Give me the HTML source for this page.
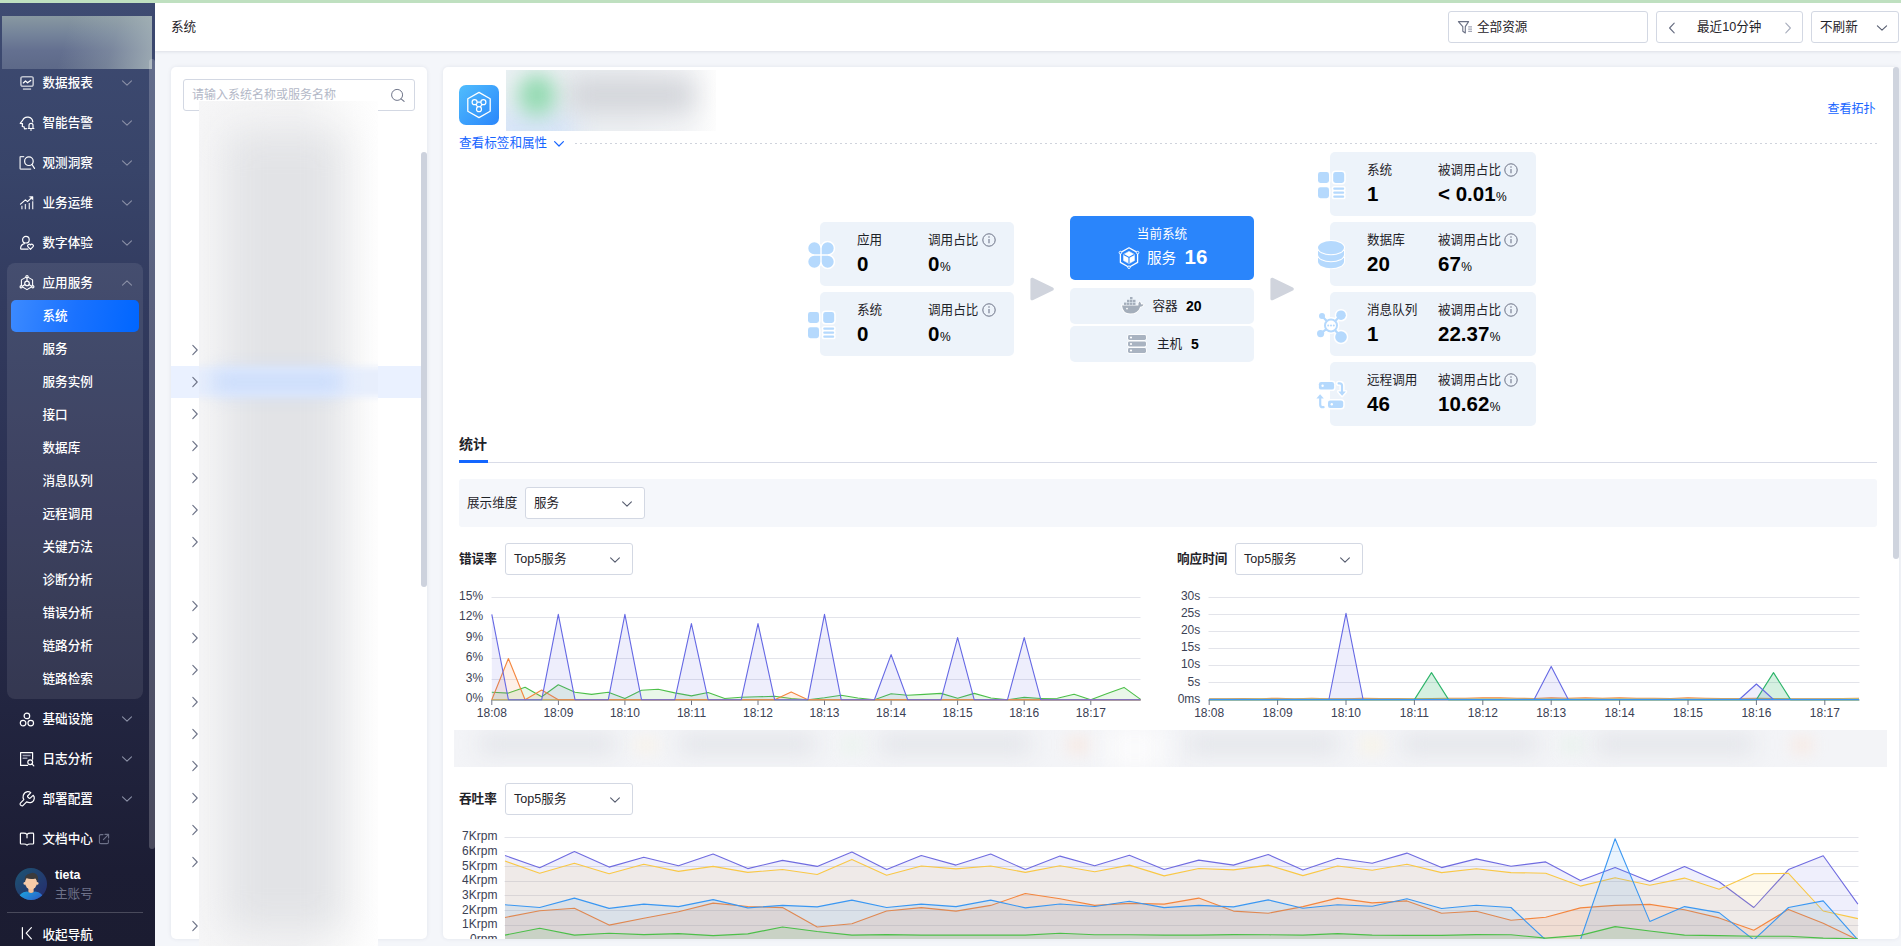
<!DOCTYPE html>
<html lang="zh-CN">
<head>
<meta charset="utf-8">
<title>系统</title>
<style>
*{box-sizing:border-box;margin:0;padding:0}
html,body{width:1901px;height:946px;overflow:hidden}
body{position:relative;background:#f4f6fa;font-family:"Liberation Sans","Noto Sans CJK SC",sans-serif;font-size:12px;color:#1f2329;}
.abs{position:absolute}
.t{position:absolute;white-space:nowrap;line-height:20px;height:20px}
#green{position:absolute;left:0;top:0;width:1901px;height:3px;background:#bfe0c0;z-index:50}
/* sidebar */
#side{position:absolute;left:0;top:0;width:155px;height:946px;background:linear-gradient(180deg,#3e4b72 0%,#384469 18%,#323b5f 32%,#2a2f50 55%,#222540 75%,#1c1d34 92%,#1b1c31 100%);overflow:hidden}
#logo{position:absolute;left:2px;top:16px;width:150px;height:53px;background:linear-gradient(105deg,rgba(172,186,188,0) 42%,rgba(172,186,188,.3) 72%,rgba(174,188,190,.78) 100%),linear-gradient(180deg,#8898a1 0%,#74839a 35%,#647090 65%,#5d6988 100%);}
#sthumb{position:absolute;left:149px;top:59px;width:6px;height:790px;border-radius:3px;background:rgba(255,255,255,.2)}
.mi{position:absolute;left:0;width:149px;height:40px}
.mi .ic{position:absolute;left:19px;top:12px;width:16px;height:16px}
.mi .tx{position:absolute;left:42.5px;top:10px;line-height:20px;font-size:12.6px;font-weight:500;color:#fff;white-space:nowrap}
.mi .ch{position:absolute;left:121px;top:15px;width:12px;height:10px}
#grp{position:absolute;left:7px;top:263px;width:136px;height:436px;border-radius:8px;background:rgba(255,255,255,.085)}
#act{position:absolute;left:11px;top:300px;width:128px;height:32px;border-radius:5px;background:linear-gradient(100deg,#3c8aff 0%,#1a72ff 50%,#0066ff 100%)}
.si{position:absolute;left:42.5px;line-height:20px;height:20px;font-size:12.6px;font-weight:500;color:#fff;white-space:nowrap}
svg{display:block;overflow:visible}
.ws{fill:none;stroke:#fff;stroke-width:1.2;stroke-linecap:round;stroke-linejoin:round}
/* topbar */
#top{position:absolute;left:155px;top:3px;width:1746px;height:48px;background:#fff;box-shadow:0 1px 3px rgba(20,30,60,.10)}
.box{position:absolute;background:#fff;border:1px solid #d3d8e3;border-radius:3px}
/* panels */
.panel{position:absolute;background:#fff;border-radius:5px;box-shadow:0 0 4px rgba(30,40,80,.08)}
.card{position:absolute;background:#edf3fa;border-radius:5px}
.lab{position:absolute;white-space:nowrap;font-size:12px;line-height:16px;color:#1f2329}
.num{position:absolute;white-space:nowrap;font-size:20.5px;line-height:24px;font-weight:700;color:#000;letter-spacing:0}
.pct{font-size:12px;font-weight:400;margin-left:.5px}
.info{position:absolute;width:14px;height:14px}
.link{color:#1664ff}
.sel{position:absolute;background:#fff;border:1px solid #d3d8e3;border-radius:3px;height:32px}
.sel span{position:absolute;left:8px;top:5px;line-height:20px;font-size:12.6px;color:#1f2329;white-space:nowrap}
.sel svg{position:absolute;right:11px;top:11px}
.ax{font-family:"Liberation Sans",sans-serif;font-size:12px;fill:#3b4154}
</style>
</head>
<body>
<div id="green"></div>
<div id="side">
<div id="logo"></div>
<div id="grp"></div><div id="act"></div>
<div class="mi" style="top:63px"><svg class="ic" viewBox="0 0 16 16"><g class="ws"><rect x="1.9" y="1.7" width="12.3" height="9.5" rx="2" stroke-width="1.6" stroke-opacity=".66"/><path d="M4.3 7.9 L6.5 5.9 L8.5 7.8 L11.7 5.4" stroke-width="1.3"/><path d="M3.9 14.1 H12.1" stroke-width="1.6" stroke-opacity=".66" stroke-linecap="butt"/></g></svg><span class="tx">数据报表</span><svg class="ch" viewBox="0 0 12 10"><path d="M1.5 2.8 L6 7.2 L10.5 2.8" fill="none" stroke="#8b90a6" stroke-width="1.1" stroke-linecap="round" stroke-linejoin="round"/></svg></div>
<div class="mi" style="top:103px"><svg class="ic" viewBox="0 0 16 16"><g class="ws"><path d="M13.8 6.9 A5.3 5.3 0 0 0 3.6 5.4 L1.2 8.3 L3.5 8.7 L3.3 11.5 L5.1 11.8 L5.5 13.9 L7.4 13.7"/><path d="M9.2 13.5 H14.9 M10 13.3 V10.3 A2 2 0 0 1 14 10.3 V13.3 M12 14.7 V15.3"/></g></svg><span class="tx">智能告警</span><svg class="ch" viewBox="0 0 12 10"><path d="M1.5 2.8 L6 7.2 L10.5 2.8" fill="none" stroke="#8b90a6" stroke-width="1.1" stroke-linecap="round" stroke-linejoin="round"/></svg></div>
<div class="mi" style="top:143px"><svg class="ic" viewBox="0 0 16 16"><g class="ws"><path d="M4.7 1.7 H1.6 Q1.1 1.7 1.1 2.2 V13.6 Q1.1 14.1 1.6 14.1 H11.7" stroke-width="1.3" stroke-opacity=".85"/><circle cx="9.9" cy="6.2" r="4.3"/><path d="M13 9.5 L15.5 13.4"/></g></svg><span class="tx">观测洞察</span><svg class="ch" viewBox="0 0 12 10"><path d="M1.5 2.8 L6 7.2 L10.5 2.8" fill="none" stroke="#8b90a6" stroke-width="1.1" stroke-linecap="round" stroke-linejoin="round"/></svg></div>
<div class="mi" style="top:183px"><svg class="ic" viewBox="0 0 16 16"><g class="ws"><path d="M2.9 14.3 V10.8 M6.4 14.3 V9 M10.3 14.3 V8 M13.7 14.3 V6.3" stroke-opacity=".8" stroke-width="1.3" stroke-linecap="butt"/><path d="M1.5 9.1 L6.4 4.9 L8.5 6.6 L12.6 2.8"/><path d="M10.6 1.6 H14 V5 Z" fill="#fff" stroke-width=".5"/></g></svg><span class="tx">业务运维</span><svg class="ch" viewBox="0 0 12 10"><path d="M1.5 2.8 L6 7.2 L10.5 2.8" fill="none" stroke="#8b90a6" stroke-width="1.1" stroke-linecap="round" stroke-linejoin="round"/></svg></div>
<div class="mi" style="top:223px"><svg class="ic" viewBox="0 0 16 16"><g class="ws"><circle cx="6.9" cy="4.7" r="3.3"/><path d="M9 14.2 H2.4 Q1.6 14.2 1.6 13.2 Q1.8 9.6 5.4 8.6"/><path d="M11.5 14.3 L8.9 11.7 A1.5 1.5 0 0 1 11.5 9.9 A1.5 1.5 0 0 1 14.1 11.7 Z"/></g></svg><span class="tx">数字体验</span><svg class="ch" viewBox="0 0 12 10"><path d="M1.5 2.8 L6 7.2 L10.5 2.8" fill="none" stroke="#8b90a6" stroke-width="1.1" stroke-linecap="round" stroke-linejoin="round"/></svg></div>
<div class="mi" style="top:263px"><svg class="ic" viewBox="0 0 16 16"><g class="ws"><path d="M8 1.6 L13.6 4.9 V11.3 L8 14.6 L2.4 11.3 V4.9 Z" stroke-width="1.1"/><circle cx="8" cy="8.4" r="2.3"/><path d="M8 2.6 V6"/><path d="M3 11.4 L6 9.6 M13 11.4 L10 9.6"/><circle cx="8" cy="1.6" r="1.1" fill="#3f4868"/><circle cx="2.2" cy="11.7" r="1.1" fill="#3f4868"/><circle cx="13.8" cy="11.7" r="1.1" fill="#3f4868"/></g></svg><span class="tx">应用服务</span><svg class="ch" viewBox="0 0 12 10"><path d="M1.5 7.2 L6 2.8 L10.5 7.2" fill="none" stroke="#8b90a6" stroke-width="1.1" stroke-linecap="round" stroke-linejoin="round"/></svg></div>
<div class="mi" style="top:699px"><svg class="ic" viewBox="0 0 16 16"><g class="ws"><circle cx="7.9" cy="4.9" r="2.8"/><circle cx="4.1" cy="12.1" r="2.8"/><circle cx="11.75" cy="12.1" r="2.8"/></g></svg><span class="tx">基础设施</span><svg class="ch" viewBox="0 0 12 10"><path d="M1.5 2.8 L6 7.2 L10.5 2.8" fill="none" stroke="#8b90a6" stroke-width="1.1" stroke-linecap="round" stroke-linejoin="round"/></svg></div>
<div class="mi" style="top:739px"><svg class="ic" viewBox="0 0 16 16"><g class="ws"><path d="M8.6 14.4 H1.6 V1.6 H13.6 V8.2"/><path d="M3.6 4.6 H11.6 M3.6 7.2 H8.4" stroke="#9a9db0" stroke-width="1.5" stroke-linecap="butt"/><circle cx="11.2" cy="11.2" r="2.4"/><path d="M13 13 L14.8 14.8"/></g></svg><span class="tx">日志分析</span><svg class="ch" viewBox="0 0 12 10"><path d="M1.5 2.8 L6 7.2 L10.5 2.8" fill="none" stroke="#8b90a6" stroke-width="1.1" stroke-linecap="round" stroke-linejoin="round"/></svg></div>
<div class="mi" style="top:779px"><svg class="ic" viewBox="0 0 16 16"><g class="ws"><path d="M8.5 0.6 Q10.4 0.4 11.8 1.6 L8.6 5 Q8.4 5.6 8.8 6 L10.2 7.3 Q10.8 7.6 11.2 7.2 L14.1 4.3 Q15.6 5.6 15.3 7.4 Q14.6 11.3 11.6 11.6 Q9.4 11.8 7.6 10.9 L3.9 14.6 Q3.1 15.3 2.2 14.6 L1.4 13.8 Q0.7 12.9 1.4 12.1 L4.8 8.6 Q3.6 6.6 4.3 4.3 Q5.4 1.2 8.5 0.6 Z"/></g></svg><span class="tx">部署配置</span><svg class="ch" viewBox="0 0 12 10"><path d="M1.5 2.8 L6 7.2 L10.5 2.8" fill="none" stroke="#8b90a6" stroke-width="1.1" stroke-linecap="round" stroke-linejoin="round"/></svg></div>
<div class="mi" style="top:819px"><svg class="ic" viewBox="0 0 16 16"><g class="ws"><path d="M8 3.4 Q6.8 2.2 4.6 2.2 H2.2 Q1.4 2.2 1.4 3 V12.2 Q1.4 13 2.2 13 H5 Q7 13 8 14.2 Q9 13 11 13 H13.8 Q14.6 13 14.6 12.2 V3 Q14.6 2.2 13.8 2.2 H11.4 Q9.2 2.2 8 3.4 Z"/><path d="M8 3.4 V6.8"/></g></svg><span class="tx">文档中心</span><svg style="position:absolute;left:98px;top:14px" width="12" height="12" viewBox="0 0 12 12"><path d="M5 1.6 H2.8 Q1.4 1.6 1.4 3 V9.2 Q1.4 10.6 2.8 10.6 H9 Q10.4 10.6 10.4 9.2 V7" fill="none" stroke="#6d7188" stroke-width="1.1" stroke-linecap="round"/><path d="M5.4 6.6 L10.4 1.6 M7 1.4 H10.6 V5" fill="none" stroke="#6d7188" stroke-width="1.1" stroke-linecap="round" stroke-linejoin="round"/></svg></div>
<span class="si" style="top:306px">系统</span>
<span class="si" style="top:339px">服务</span>
<span class="si" style="top:372px">服务实例</span>
<span class="si" style="top:405px">接口</span>
<span class="si" style="top:438px">数据库</span>
<span class="si" style="top:471px">消息队列</span>
<span class="si" style="top:504px">远程调用</span>
<span class="si" style="top:537px">关键方法</span>
<span class="si" style="top:570px">诊断分析</span>
<span class="si" style="top:603px">错误分析</span>
<span class="si" style="top:636px">链路分析</span>
<span class="si" style="top:669px">链路检索</span>
<svg style="position:absolute;left:15px;top:868px" width="32" height="32" viewBox="0 0 32 32"><defs><linearGradient id="avb" x1="0" y1="0" x2="1" y2="1"><stop offset="0" stop-color="#1d5573"/><stop offset="1" stop-color="#262a6c"/></linearGradient><linearGradient id="avs" x1="0" y1="0" x2="1" y2="0.6"><stop offset="0" stop-color="#1ca9e0"/><stop offset="1" stop-color="#2b5cc6"/></linearGradient><clipPath id="avc"><circle cx="16" cy="16" r="16"/></clipPath></defs><g clip-path="url(#avc)"><rect width="32" height="32" fill="url(#avb)"/><path d="M3 34 Q3 24.5 12 23.6 L16 25 L20 23.6 Q29 24.5 29 34 Z" fill="url(#avs)"/><path d="M13.4 19 H18.6 V24 Q16 26 13.4 24 Z" fill="#f3c19b"/><ellipse cx="16" cy="14.6" rx="6" ry="7" fill="#f7cba8"/><circle cx="9.8" cy="15.4" r="1.3" fill="#f7cba8"/><circle cx="22.2" cy="15.4" r="1.3" fill="#f7cba8"/><path d="M9.6 14.6 Q8.6 6.2 15 5.4 Q19 3.6 21.6 6.6 Q24 9 22.6 14.6 Q22 11.6 20.6 10.4 Q15 11.6 11.4 10 Q10 11.6 9.6 14.6 Z" fill="#3b3b3d"/></g></svg>
<span class="t" style="left:55px;top:865px;font-size:12.4px;font-weight:700;color:#fff;font-family:'Liberation Sans',sans-serif">tieta</span>
<span class="t" style="left:55px;top:883.5px;font-size:12.6px;color:#6e7289">主账号</span>
<div class="abs" style="left:7px;top:912px;width:136px;height:1px;background:rgba(255,255,255,.2)"></div>
<svg style="position:absolute;left:19px;top:925px" width="16" height="16" viewBox="0 0 16 16"><path d="M3.4 2.6 V13.8 M12.4 2.6 L7.2 8.2 L12.4 13.8" fill="none" stroke="#fff" stroke-width="1.2" stroke-linecap="round" stroke-linejoin="round"/></svg>
<span class="si" style="top:924.5px">收起导航</span>
<div id="sthumb"></div>
</div>
<div id="top">
<span class="t" style="left:16px;top:14px;font-size:12.6px;color:#1f2329">系统</span>
</div>
<div class="box" style="left:1448px;top:11px;width:200px;height:32px"><svg style="position:absolute;left:9px;top:8px" width="16" height="16" viewBox="0 0 16 16"><path d="M0.4 1.6 H10.6 L7.3 6.6 V13 L4.8 11.2 V6.6 Z" fill="none" stroke="#6b7185" stroke-width="1.1" stroke-linejoin="round"/><path d="M10.2 6.9 H14 M10.2 9.1 H14 M10.2 11.3 H14" stroke="#8a8fa3" stroke-width="1"/></svg><span class="t" style="left:28px;top:5px;font-size:12.6px;color:#1f2329">全部资源</span></div>
<div class="box" style="left:1656px;top:11px;width:147px;height:32px"><svg style="position:absolute;left:10px;top:10px" width="10" height="12" viewBox="0 0 10 12"><path d="M7.2 1.2 L2.6 6 L7.2 10.8" fill="none" stroke="#666c80" stroke-width="1.1" stroke-linecap="round" stroke-linejoin="round"/></svg><span class="t" style="left:40px;top:5px;font-size:12.6px;color:#1f2329">最近10分钟</span><svg style="position:absolute;left:126px;top:10px" width="10" height="12" viewBox="0 0 10 12"><path d="M2.8 1.2 L7.4 6 L2.8 10.8" fill="none" stroke="#a9aebd" stroke-width="1.1" stroke-linecap="round" stroke-linejoin="round"/></svg></div>
<div class="box" style="left:1811px;top:11px;width:88px;height:32px"><span class="t" style="left:8px;top:5px;font-size:12.6px;color:#1f2329">不刷新</span><svg style="position:absolute;left:64px;top:11px" width="12" height="10" viewBox="0 0 12 10"><path d="M1.4 2.8 L6 7.2 L10.6 2.8" fill="none" stroke="#555b6e" stroke-width="1.1" stroke-linecap="round" stroke-linejoin="round"/></svg></div>
<div class="panel" style="left:171px;top:67px;width:256px;height:872px;overflow:hidden">
<div class="abs" style="left:0;top:299px;width:250px;height:32px;background:#eaf1ff"></div>
<svg style="position:absolute;left:20px;top:277px" width="8" height="12" viewBox="0 0 8 12"><path d="M1.8 1.4 L6.2 6 L1.8 10.6" fill="none" stroke="#6d7387" stroke-width="1.1" stroke-linecap="round" stroke-linejoin="round"/></svg>
<svg style="position:absolute;left:20px;top:309px" width="8" height="12" viewBox="0 0 8 12"><path d="M1.8 1.4 L6.2 6 L1.8 10.6" fill="none" stroke="#6d7387" stroke-width="1.1" stroke-linecap="round" stroke-linejoin="round"/></svg>
<svg style="position:absolute;left:20px;top:341px" width="8" height="12" viewBox="0 0 8 12"><path d="M1.8 1.4 L6.2 6 L1.8 10.6" fill="none" stroke="#6d7387" stroke-width="1.1" stroke-linecap="round" stroke-linejoin="round"/></svg>
<svg style="position:absolute;left:20px;top:373px" width="8" height="12" viewBox="0 0 8 12"><path d="M1.8 1.4 L6.2 6 L1.8 10.6" fill="none" stroke="#6d7387" stroke-width="1.1" stroke-linecap="round" stroke-linejoin="round"/></svg>
<svg style="position:absolute;left:20px;top:405px" width="8" height="12" viewBox="0 0 8 12"><path d="M1.8 1.4 L6.2 6 L1.8 10.6" fill="none" stroke="#6d7387" stroke-width="1.1" stroke-linecap="round" stroke-linejoin="round"/></svg>
<svg style="position:absolute;left:20px;top:437px" width="8" height="12" viewBox="0 0 8 12"><path d="M1.8 1.4 L6.2 6 L1.8 10.6" fill="none" stroke="#6d7387" stroke-width="1.1" stroke-linecap="round" stroke-linejoin="round"/></svg>
<svg style="position:absolute;left:20px;top:469px" width="8" height="12" viewBox="0 0 8 12"><path d="M1.8 1.4 L6.2 6 L1.8 10.6" fill="none" stroke="#6d7387" stroke-width="1.1" stroke-linecap="round" stroke-linejoin="round"/></svg>
<svg style="position:absolute;left:20px;top:533px" width="8" height="12" viewBox="0 0 8 12"><path d="M1.8 1.4 L6.2 6 L1.8 10.6" fill="none" stroke="#6d7387" stroke-width="1.1" stroke-linecap="round" stroke-linejoin="round"/></svg>
<svg style="position:absolute;left:20px;top:565px" width="8" height="12" viewBox="0 0 8 12"><path d="M1.8 1.4 L6.2 6 L1.8 10.6" fill="none" stroke="#6d7387" stroke-width="1.1" stroke-linecap="round" stroke-linejoin="round"/></svg>
<svg style="position:absolute;left:20px;top:597px" width="8" height="12" viewBox="0 0 8 12"><path d="M1.8 1.4 L6.2 6 L1.8 10.6" fill="none" stroke="#6d7387" stroke-width="1.1" stroke-linecap="round" stroke-linejoin="round"/></svg>
<svg style="position:absolute;left:20px;top:629px" width="8" height="12" viewBox="0 0 8 12"><path d="M1.8 1.4 L6.2 6 L1.8 10.6" fill="none" stroke="#6d7387" stroke-width="1.1" stroke-linecap="round" stroke-linejoin="round"/></svg>
<svg style="position:absolute;left:20px;top:661px" width="8" height="12" viewBox="0 0 8 12"><path d="M1.8 1.4 L6.2 6 L1.8 10.6" fill="none" stroke="#6d7387" stroke-width="1.1" stroke-linecap="round" stroke-linejoin="round"/></svg>
<svg style="position:absolute;left:20px;top:693px" width="8" height="12" viewBox="0 0 8 12"><path d="M1.8 1.4 L6.2 6 L1.8 10.6" fill="none" stroke="#6d7387" stroke-width="1.1" stroke-linecap="round" stroke-linejoin="round"/></svg>
<svg style="position:absolute;left:20px;top:725px" width="8" height="12" viewBox="0 0 8 12"><path d="M1.8 1.4 L6.2 6 L1.8 10.6" fill="none" stroke="#6d7387" stroke-width="1.1" stroke-linecap="round" stroke-linejoin="round"/></svg>
<svg style="position:absolute;left:20px;top:757px" width="8" height="12" viewBox="0 0 8 12"><path d="M1.8 1.4 L6.2 6 L1.8 10.6" fill="none" stroke="#6d7387" stroke-width="1.1" stroke-linecap="round" stroke-linejoin="round"/></svg>
<svg style="position:absolute;left:20px;top:789px" width="8" height="12" viewBox="0 0 8 12"><path d="M1.8 1.4 L6.2 6 L1.8 10.6" fill="none" stroke="#6d7387" stroke-width="1.1" stroke-linecap="round" stroke-linejoin="round"/></svg>
<svg style="position:absolute;left:20px;top:853px" width="8" height="12" viewBox="0 0 8 12"><path d="M1.8 1.4 L6.2 6 L1.8 10.6" fill="none" stroke="#6d7387" stroke-width="1.1" stroke-linecap="round" stroke-linejoin="round"/></svg>
<div class="abs" style="left:250px;top:85px;width:6px;height:435px;border-radius:3px;background:#cdd2dd"></div>
</div>
<div class="box" style="left:183px;top:79px;width:232px;height:32px"><span class="t" style="left:8px;top:5px;font-size:12px;color:#b3b8c7">请输入系统名称或服务名称</span><svg style="position:absolute;left:206px;top:8px" width="16" height="16" viewBox="0 0 16 16"><circle cx="7.1" cy="6.9" r="5.5" fill="none" stroke="#70768a" stroke-width="1"/><path d="M11.1 10.8 L14.1 13.4" stroke="#70768a" stroke-width="1.1" stroke-linecap="round"/></svg></div>
<div class="abs" style="left:199px;top:101px;width:179px;height:845px;background:linear-gradient(90deg,#f6f6f7 0%,#f4f4f5 55%,#fbfbfb 85%,#fefefe 100%);overflow:hidden"><div class="abs" style="left:26px;top:30px;width:118px;height:800px;background:#e2e3e6;filter:blur(19px)"></div><div class="abs" style="left:-10px;top:266px;width:200px;height:30px;background:#e7eefc;filter:blur(3px)"></div><div class="abs" style="left:14px;top:270px;width:130px;height:22px;background:#c8dbfc;filter:blur(10px)"></div></div>
<div class="panel" style="left:443px;top:67px;width:1456px;height:872px"></div>
<div class="abs" style="left:1893px;top:67px;width:6px;height:492px;border-radius:3px;background:#cfd4de"></div>
<svg class="abs" style="left:459px;top:85px" width="40" height="40" viewBox="0 0 40 40"><defs><linearGradient id="ag" x1="0" y1="0" x2="1" y2="1"><stop offset="0" stop-color="#50bdfd"/><stop offset="1" stop-color="#2a86fb"/></linearGradient></defs><rect width="40" height="40" rx="7" fill="url(#ag)"/><path d="M20 7.4 L31.2 13.7 V26.3 L20 32.6 L8.8 26.3 V13.7 Z" fill="none" stroke="#fff" stroke-width="1.3" stroke-linejoin="round"/><g fill="none" stroke="#fff" stroke-width="1.2"><circle cx="15.6" cy="17.2" r="2.5"/><circle cx="24.4" cy="17.2" r="2.5"/><circle cx="20" cy="24.2" r="2.5"/><path d="M18.1 17.2 H21.9 M16.9 19.3 L18.8 22.1 M23.1 19.3 L21.2 22.1"/></g></svg>
<div class="abs" style="left:506px;top:70px;width:210px;height:61px;overflow:hidden;background:linear-gradient(90deg,#eaf0f3 0%,#eef0f3 60%,#f4f5f7 85%,#fdfdfd 100%)"><div class="abs" style="left:-20px;top:40px;width:90px;height:40px;background:#d6e4f8;filter:blur(13px)"></div><div class="abs" style="left:62px;top:8px;width:126px;height:34px;background:#d2d4d9;filter:blur(13px)"></div><div class="abs" style="left:12px;top:4px;width:38px;height:42px;border-radius:50%;background:#93dab1;filter:blur(10px)"></div></div>
<span class="t link" style="left:459px;top:133px;font-size:12.6px">查看标签和属性</span>
<svg class="abs" style="left:553px;top:139px" width="12" height="10" viewBox="0 0 12 10"><path d="M1.6 2.6 L6 7 L10.4 2.6" fill="none" stroke="#1664ff" stroke-width="1.2" stroke-linecap="round" stroke-linejoin="round"/></svg>
<div class="abs" style="left:575px;top:143px;width:1302px;height:1px;background:repeating-linear-gradient(90deg,#cfd3dc 0,#cfd3dc 2px,transparent 2px,transparent 5px)"></div>
<span class="t link" style="left:1827.5px;top:99px;font-size:12px">查看拓扑</span>
<div class="card" style="left:820px;top:222px;width:194px;height:64px"></div>
<svg class="abs" style="left:808px;top:242px" width="26" height="26" viewBox="0 0 26 26"><g fill="#fff" stroke="#fff" stroke-width="3" stroke-linejoin="round" stroke-linecap="round"><path d="M6.3 0.3 A6 6 0 0 1 12.3 6.3 V12.3 H6.3 A6 6 0 0 1 6.3 0.3 Z"/><path d="M19.7 0.3 A6 6 0 0 1 19.7 12.3 H13.7 V6.3 A6 6 0 0 1 19.7 0.3 Z"/><path d="M6.3 25.7 A6 6 0 0 1 6.3 13.7 H12.3 V19.7 A6 6 0 0 1 6.3 25.7 Z"/><path d="M19.7 25.7 A6 6 0 0 0 19.7 13.7 H13.7 V19.7 A6 6 0 0 0 19.7 25.7 Z"/></g><g fill="#b5d9fd" stroke="#b5d9fd" stroke-width="0" stroke-linejoin="round" stroke-linecap="round"><path d="M6.3 0.3 A6 6 0 0 1 12.3 6.3 V12.3 H6.3 A6 6 0 0 1 6.3 0.3 Z"/><path d="M19.7 0.3 A6 6 0 0 1 19.7 12.3 H13.7 V6.3 A6 6 0 0 1 19.7 0.3 Z"/><path d="M6.3 25.7 A6 6 0 0 1 6.3 13.7 H12.3 V19.7 A6 6 0 0 1 6.3 25.7 Z"/><path d="M19.7 25.7 A6 6 0 0 0 19.7 13.7 H13.7 V19.7 A6 6 0 0 0 19.7 25.7 Z"/></g></svg>
<span class="lab" style="left:857px;top:232px;font-size:12.6px">应用</span>
<span class="num" style="left:857px;top:252px">0</span>
<span class="lab" style="left:928px;top:232px;font-size:12.6px">调用占比</span>
<svg class="info" style="left:982px;top:233px" viewBox="0 0 14 14"><circle cx="7" cy="7" r="6.2" fill="none" stroke="#6b7185" stroke-width="1"/><path d="M7 6.1 V10.3" stroke="#6b7185" stroke-width="1.05"/><circle cx="7" cy="4.1" r=".75" fill="#6b7185"/></svg>
<span class="num" style="left:928px;top:252px">0<span class="pct">%</span></span>
<div class="card" style="left:820px;top:292px;width:194px;height:64px"></div>
<svg class="abs" style="left:808px;top:312px" width="26" height="26" viewBox="0 0 26 26"><g fill="#fff" stroke="#fff" stroke-width="3" stroke-linejoin="round" stroke-linecap="round"><rect x="0" y="0" width="11" height="11" rx="2.4"/><rect x="15.2" y="0" width="11" height="11" rx="2.4"/><rect x="0" y="15.2" width="11" height="11" rx="2.4"/><rect x="15.2" y="15.6" width="11" height="2.2" rx="1.1"/><rect x="15.2" y="19.6" width="11" height="2.2" rx="1.1"/><rect x="15.2" y="23.6" width="11" height="2.2" rx="1.1"/></g><g fill="#b5d9fd" stroke="#b5d9fd" stroke-width="0" stroke-linejoin="round" stroke-linecap="round"><rect x="0" y="0" width="11" height="11" rx="2.4"/><rect x="15.2" y="0" width="11" height="11" rx="2.4"/><rect x="0" y="15.2" width="11" height="11" rx="2.4"/><rect x="15.2" y="15.6" width="11" height="2.2" rx="1.1"/><rect x="15.2" y="19.6" width="11" height="2.2" rx="1.1"/><rect x="15.2" y="23.6" width="11" height="2.2" rx="1.1"/></g></svg>
<span class="lab" style="left:857px;top:302px;font-size:12.6px">系统</span>
<span class="num" style="left:857px;top:322px">0</span>
<span class="lab" style="left:928px;top:302px;font-size:12.6px">调用占比</span>
<svg class="info" style="left:982px;top:303px" viewBox="0 0 14 14"><circle cx="7" cy="7" r="6.2" fill="none" stroke="#6b7185" stroke-width="1"/><path d="M7 6.1 V10.3" stroke="#6b7185" stroke-width="1.05"/><circle cx="7" cy="4.1" r=".75" fill="#6b7185"/></svg>
<span class="num" style="left:928px;top:322px">0<span class="pct">%</span></span>
<div class="card" style="left:1330px;top:152px;width:206px;height:64px"></div>
<svg class="abs" style="left:1318px;top:172px" width="26" height="26" viewBox="0 0 26 26"><g fill="#fff" stroke="#fff" stroke-width="3" stroke-linejoin="round" stroke-linecap="round"><rect x="0" y="0" width="11" height="11" rx="2.4"/><rect x="15.2" y="0" width="11" height="11" rx="2.4"/><rect x="0" y="15.2" width="11" height="11" rx="2.4"/><rect x="15.2" y="15.6" width="11" height="2.2" rx="1.1"/><rect x="15.2" y="19.6" width="11" height="2.2" rx="1.1"/><rect x="15.2" y="23.6" width="11" height="2.2" rx="1.1"/></g><g fill="#b5d9fd" stroke="#b5d9fd" stroke-width="0" stroke-linejoin="round" stroke-linecap="round"><rect x="0" y="0" width="11" height="11" rx="2.4"/><rect x="15.2" y="0" width="11" height="11" rx="2.4"/><rect x="0" y="15.2" width="11" height="11" rx="2.4"/><rect x="15.2" y="15.6" width="11" height="2.2" rx="1.1"/><rect x="15.2" y="19.6" width="11" height="2.2" rx="1.1"/><rect x="15.2" y="23.6" width="11" height="2.2" rx="1.1"/></g></svg>
<span class="lab" style="left:1367px;top:162px;font-size:12.6px">系统</span>
<span class="num" style="left:1367px;top:182px">1</span>
<span class="lab" style="left:1438px;top:162px;font-size:12.6px">被调用占比</span>
<svg class="info" style="left:1504px;top:163px" viewBox="0 0 14 14"><circle cx="7" cy="7" r="6.2" fill="none" stroke="#6b7185" stroke-width="1"/><path d="M7 6.1 V10.3" stroke="#6b7185" stroke-width="1.05"/><circle cx="7" cy="4.1" r=".75" fill="#6b7185"/></svg>
<span class="num" style="left:1438px;top:182px">&lt; 0.01<span class="pct">%</span></span>
<div class="card" style="left:1330px;top:222px;width:206px;height:64px"></div>
<svg class="abs" style="left:1318px;top:241px" width="26" height="28" viewBox="0 0 26 28"><g fill="#b5d9fd" stroke="#fff" stroke-width="2.2" paint-order="stroke"><path d="M0 17 V20.6 A13 6.6 0 0 0 26 20.6 V17 Z"/><path d="M0 10 V13.6 A13 6.6 0 0 0 26 13.6 V10 Z"/><ellipse cx="13" cy="6.6" rx="13" ry="6.6"/></g></svg>
<span class="lab" style="left:1367px;top:232px;font-size:12.6px">数据库</span>
<span class="num" style="left:1367px;top:252px">20</span>
<span class="lab" style="left:1438px;top:232px;font-size:12.6px">被调用占比</span>
<svg class="info" style="left:1504px;top:233px" viewBox="0 0 14 14"><circle cx="7" cy="7" r="6.2" fill="none" stroke="#6b7185" stroke-width="1"/><path d="M7 6.1 V10.3" stroke="#6b7185" stroke-width="1.05"/><circle cx="7" cy="4.1" r=".75" fill="#6b7185"/></svg>
<span class="num" style="left:1438px;top:252px">67<span class="pct">%</span></span>
<div class="card" style="left:1330px;top:292px;width:206px;height:64px"></div>
<svg class="abs" style="left:1318px;top:312px" width="26" height="26" viewBox="0 0 26 26"><g fill="#fff" stroke="#fff" stroke-width="3" stroke-linejoin="round" stroke-linecap="round"><path d="M4 4 L13 13.5 L23 3 M13 13.5 L2.6 21.6 M13 13.5 L23 25" fill="none" stroke-width="5.2"/><circle cx="4" cy="4" r="3"/><circle cx="23" cy="3.2" r="4.8"/><circle cx="2.6" cy="21.6" r="3.6"/><circle cx="23" cy="25" r="5.8"/><circle cx="13" cy="13.5" r="7"/></g><g fill="#b5d9fd" stroke="#b5d9fd" stroke-width="0" stroke-linejoin="round" stroke-linecap="round"><path d="M4 4 L13 13.5 L23 3 M13 13.5 L2.6 21.6 M13 13.5 L23 25" fill="none" stroke-width="2.2"/><circle cx="4" cy="4" r="3"/><circle cx="23" cy="3.2" r="4.8"/><circle cx="2.6" cy="21.6" r="3.6"/><circle cx="23" cy="25" r="5.8"/><circle cx="13" cy="13.5" r="7"/></g><circle cx="13" cy="13.5" r="5" fill="#fff"/><g fill="#b5d9fd"><circle cx="10.2" cy="13.5" r="1"/><circle cx="13" cy="13.5" r="1"/><circle cx="15.8" cy="13.5" r="1"/></g></svg>
<span class="lab" style="left:1367px;top:302px;font-size:12.6px">消息队列</span>
<span class="num" style="left:1367px;top:322px">1</span>
<span class="lab" style="left:1438px;top:302px;font-size:12.6px">被调用占比</span>
<svg class="info" style="left:1504px;top:303px" viewBox="0 0 14 14"><circle cx="7" cy="7" r="6.2" fill="none" stroke="#6b7185" stroke-width="1"/><path d="M7 6.1 V10.3" stroke="#6b7185" stroke-width="1.05"/><circle cx="7" cy="4.1" r=".75" fill="#6b7185"/></svg>
<span class="num" style="left:1438px;top:322px">22.37<span class="pct">%</span></span>
<div class="card" style="left:1330px;top:362px;width:206px;height:64px"></div>
<svg class="abs" style="left:1318px;top:382px" width="26" height="26" viewBox="0 0 26 26"><g fill="#fff" stroke="#fff" stroke-width="3" stroke-linejoin="round" stroke-linecap="round"><rect x="0.9" y="0" width="15.2" height="7.6" rx="2.2"/><rect x="10" y="18.4" width="15.2" height="7.6" rx="2.2"/><path d="M20.6 1.4 H21.6 Q24 1.4 24 3.8 V9.6" fill="none" stroke-width="5.2"/><path d="M20.4 9.5 H27.8 L24.1 13.8 Z"/><path d="M5.6 25.2 H4.6 Q2.2 25.2 2.2 22.8 V16.6" fill="none" stroke-width="5.2"/><path d="M-1.6 16.6 H5.8 L2.1 12.3 Z"/></g><g fill="#b5d9fd" stroke="#b5d9fd" stroke-width="0" stroke-linejoin="round" stroke-linecap="round"><rect x="0.9" y="0" width="15.2" height="7.6" rx="2.2"/><rect x="10" y="18.4" width="15.2" height="7.6" rx="2.2"/><path d="M20.6 1.4 H21.6 Q24 1.4 24 3.8 V9.6" fill="none" stroke-width="2.2"/><path d="M20.4 9.5 H27.8 L24.1 13.8 Z"/><path d="M5.6 25.2 H4.6 Q2.2 25.2 2.2 22.8 V16.6" fill="none" stroke-width="2.2"/><path d="M-1.6 16.6 H5.8 L2.1 12.3 Z"/></g><circle cx="4.6" cy="3.8" r="1.2" fill="#fff"/><circle cx="13.8" cy="22.2" r="1.2" fill="#fff"/></svg>
<span class="lab" style="left:1367px;top:372px;font-size:12.6px">远程调用</span>
<span class="num" style="left:1367px;top:392px">46</span>
<span class="lab" style="left:1438px;top:372px;font-size:12.6px">被调用占比</span>
<svg class="info" style="left:1504px;top:373px" viewBox="0 0 14 14"><circle cx="7" cy="7" r="6.2" fill="none" stroke="#6b7185" stroke-width="1"/><path d="M7 6.1 V10.3" stroke="#6b7185" stroke-width="1.05"/><circle cx="7" cy="4.1" r=".75" fill="#6b7185"/></svg>
<span class="num" style="left:1438px;top:392px">10.62<span class="pct">%</span></span>
<svg class="abs" style="left:1030px;top:277px" width="24" height="24" viewBox="0 0 24 24"><path d="M2 2.3 L22.2 12 L2 21.7 Z" fill="#d0d4dd" stroke="#d0d4dd" stroke-width="3.2" stroke-linejoin="round"/></svg>
<svg class="abs" style="left:1270px;top:277px" width="24" height="24" viewBox="0 0 24 24"><path d="M2 2.3 L22.2 12 L2 21.7 Z" fill="#d0d4dd" stroke="#d0d4dd" stroke-width="3.2" stroke-linejoin="round"/></svg>
<div class="abs" style="left:1070px;top:216px;width:184px;height:64px;border-radius:5px;background:#2a85fb"></div>
<span class="t" style="left:1070px;width:184px;text-align:center;top:224px;font-size:12.6px;color:#fff">当前系统</span>
<svg class="abs" style="left:1118px;top:246px" width="22" height="23" viewBox="0 0 22 23"><g fill="none" stroke="#fff" stroke-linejoin="round"><path d="M11 1.8 L19.6 6.6 V16.4 L11 21.2 L2.4 16.4 V6.6 Z" stroke-width="1.3"/><path d="M11 5.4 L16.4 8.4 V14.6 L11 17.6 L5.6 14.6 V8.4 Z" fill="#fff" stroke-width=".6"/></g><path d="M5.6 8.4 L11 11.4 L16.4 8.4 M11 11.4 V17.6" fill="none" stroke="#2a85fb" stroke-width="1.1"/><g fill="#2a85fb" stroke="#fff" stroke-width=".9"><circle cx="2.4" cy="6.6" r="1.3"/><circle cx="19.6" cy="6.6" r="1.3"/><circle cx="11" cy="21.2" r="1.3"/></g></svg>
<span class="t" style="left:1147px;top:248px;font-size:14.6px;color:#fff">服务</span>
<span class="t" style="left:1184.5px;top:247px;font-size:20.5px;font-weight:700;color:#fff;font-family:'Liberation Sans',sans-serif">16</span>
<div class="card" style="left:1070px;top:288px;width:184px;height:36px"></div>
<div class="card" style="left:1070px;top:326px;width:184px;height:36px"></div>
<svg class="abs" style="left:1121px;top:297px" width="23" height="18" viewBox="0 0 23 18"><g fill="#a4aebb" stroke="#fff" stroke-width="1.6" paint-order="stroke"><path d="M1 8.6 H17.4 Q17 6.2 18.4 4.6 Q20 5.8 20.2 7.4 Q21.6 7 22.6 7.8 Q21.6 9.8 19.2 9.8 Q17 16.6 9.2 16.6 Q2 16.6 1 8.6 Z"/></g><g fill="#a4aebb"><rect x="3" y="5.6" width="2.5" height="2.3"/><rect x="6" y="5.6" width="2.5" height="2.3"/><rect x="9" y="5.6" width="2.5" height="2.3"/><rect x="12" y="5.6" width="2.5" height="2.3"/><rect x="6" y="2.8" width="2.5" height="2.3"/><rect x="9" y="2.8" width="2.5" height="2.3"/><rect x="12" y="2.8" width="2.5" height="2.3"/><rect x="9" y="0" width="2.5" height="2.3"/></g><circle cx="6" cy="11.6" r=".9" fill="#fff"/></svg>
<span class="t" style="left:1152.5px;top:296px;font-size:12.6px;color:#1f2329">容器</span>
<span class="t" style="left:1186px;top:296px;font-size:14px;font-weight:700;color:#000;font-family:'Liberation Sans',sans-serif">20</span>
<svg class="abs" style="left:1127px;top:334px" width="20" height="20" viewBox="0 0 20 20"><g fill="#a9b3c1" stroke="#fff" stroke-width="1.4" paint-order="stroke"><rect x="1" y="1" width="18" height="5" rx="1.4"/><rect x="1" y="7.5" width="18" height="5" rx="1.4"/><rect x="1" y="14" width="18" height="5" rx="1.4"/></g><g fill="#fff"><circle cx="4" cy="3.5" r="1.1"/><circle cx="4" cy="10" r="1.1"/><circle cx="4" cy="16.5" r="1.1"/></g></svg>
<span class="t" style="left:1157px;top:334px;font-size:12.6px;color:#1f2329">主机</span>
<span class="t" style="left:1191px;top:334px;font-size:14px;font-weight:700;color:#000;font-family:'Liberation Sans',sans-serif">5</span>
<span class="t" style="left:459px;top:434px;font-size:14px;font-weight:700;color:#1f2329">统计</span>
<div class="abs" style="left:459px;top:462px;width:1418px;height:1px;background:#d9dce8"></div>
<div class="abs" style="left:459px;top:460px;width:29px;height:3px;background:#1366ff"></div>
<div class="abs" style="left:459px;top:479px;width:1418px;height:48px;border-radius:3px;background:#f5f7fb"></div>
<span class="t" style="left:467px;top:493px;font-size:12.6px">展示维度</span>
<div class="sel" style="left:525px;top:487px;width:120px"><span>服务</span><svg width="12" height="10" viewBox="0 0 12 10"><path d="M1.6 2.8 L6 7.2 L10.4 2.8" fill="none" stroke="#555b6e" stroke-width="1.1" stroke-linecap="round" stroke-linejoin="round"/></svg></div>
<span class="t" style="left:459px;top:549px;font-size:12.6px;font-weight:700">错误率</span>
<div class="sel" style="left:505px;top:543px;width:128px"><span>Top5服务</span><svg width="12" height="10" viewBox="0 0 12 10"><path d="M1.6 2.8 L6 7.2 L10.4 2.8" fill="none" stroke="#555b6e" stroke-width="1.1" stroke-linecap="round" stroke-linejoin="round"/></svg></div>
<span class="t" style="left:1177px;top:549px;font-size:12.6px;font-weight:700">响应时间</span>
<div class="sel" style="left:1235px;top:543px;width:128px"><span>Top5服务</span><svg width="12" height="10" viewBox="0 0 12 10"><path d="M1.6 2.8 L6 7.2 L10.4 2.8" fill="none" stroke="#555b6e" stroke-width="1.1" stroke-linecap="round" stroke-linejoin="round"/></svg></div>
<span class="t" style="left:459px;top:789px;font-size:12.6px;font-weight:700">吞吐率</span>
<div class="sel" style="left:505px;top:783px;width:128px"><span>Top5服务</span><svg width="12" height="10" viewBox="0 0 12 10"><path d="M1.6 2.8 L6 7.2 L10.4 2.8" fill="none" stroke="#555b6e" stroke-width="1.1" stroke-linecap="round" stroke-linejoin="round"/></svg></div>
<div class="abs" style="left:454px;top:730px;width:1433px;height:37px;background:#f3f4f7;overflow:hidden">
<div class="abs" style="left:26px;top:6px;width:135px;height:16px;background:#dfe1e6;filter:blur(11px)"></div>
<div class="abs" style="left:226px;top:6px;width:135px;height:16px;background:#dfe1e6;filter:blur(11px)"></div>
<div class="abs" style="left:426px;top:6px;width:150px;height:16px;background:#dfe1e6;filter:blur(11px)"></div>
<div class="abs" style="left:734px;top:6px;width:150px;height:16px;background:#dfe1e6;filter:blur(11px)"></div>
<div class="abs" style="left:948px;top:6px;width:135px;height:16px;background:#dfe1e6;filter:blur(11px)"></div>
<div class="abs" style="left:1141px;top:6px;width:158px;height:16px;background:#dfe1e6;filter:blur(11px)"></div>
<div class="abs" style="left:182px;top:8px;width:20px;height:14px;background:#fcf3e2;filter:blur(8px);opacity:.7"></div>
<div class="abs" style="left:388px;top:8px;width:20px;height:14px;background:#e6f4e8;filter:blur(8px);opacity:.7"></div>
<div class="abs" style="left:614px;top:8px;width:20px;height:14px;background:#fbe3d6;filter:blur(8px);opacity:.7"></div>
<div class="abs" style="left:908px;top:8px;width:20px;height:14px;background:#fdf5dc;filter:blur(8px);opacity:.7"></div>
<div class="abs" style="left:1108px;top:8px;width:20px;height:14px;background:#e2f1e6;filter:blur(8px);opacity:.7"></div>
<div class="abs" style="left:1338px;top:8px;width:20px;height:14px;background:#fbe3d6;filter:blur(8px);opacity:.7"></div>
<div class="abs" style="left:651px;top:-4px;width:60px;height:45px;background:#fbfbfc;filter:blur(12px)"></div>
</div>
<svg class="abs" style="left:0;top:0" width="1901" height="946" viewBox="0 0 1901 946">
<path d="M491.5 597.5 H1140.5" stroke="#e3e4ea" stroke-width="1"/>
<text class="ax" x="483.1" y="599.9" text-anchor="end">15%</text>
<path d="M491.5 617.5 H1140.5" stroke="#e3e4ea" stroke-width="1"/>
<text class="ax" x="483.1" y="620.4" text-anchor="end">12%</text>
<path d="M491.5 638.5 H1140.5" stroke="#e3e4ea" stroke-width="1"/>
<text class="ax" x="483.1" y="640.8" text-anchor="end">9%</text>
<path d="M491.5 658.5 H1140.5" stroke="#e3e4ea" stroke-width="1"/>
<text class="ax" x="483.1" y="661.2" text-anchor="end">6%</text>
<path d="M491.5 679.5 H1140.5" stroke="#e3e4ea" stroke-width="1"/>
<text class="ax" x="483.1" y="681.7" text-anchor="end">3%</text>
<text class="ax" x="483.1" y="702.1" text-anchor="end">0%</text>
<path d="M491.5 700 H1140.5" stroke="#6e7488" stroke-width="1"/>
<path d="M491.8 700 V705" stroke="#6e7488" stroke-width="1"/>
<text class="ax" x="491.8" y="717" text-anchor="middle">18:08</text>
<path d="M558.4 700 V705" stroke="#6e7488" stroke-width="1"/>
<text class="ax" x="558.4" y="717" text-anchor="middle">18:09</text>
<path d="M624.9 700 V705" stroke="#6e7488" stroke-width="1"/>
<text class="ax" x="624.9" y="717" text-anchor="middle">18:10</text>
<path d="M691.5 700 V705" stroke="#6e7488" stroke-width="1"/>
<text class="ax" x="691.5" y="717" text-anchor="middle">18:11</text>
<path d="M758.0 700 V705" stroke="#6e7488" stroke-width="1"/>
<text class="ax" x="758.0" y="717" text-anchor="middle">18:12</text>
<path d="M824.5 700 V705" stroke="#6e7488" stroke-width="1"/>
<text class="ax" x="824.5" y="717" text-anchor="middle">18:13</text>
<path d="M891.1 700 V705" stroke="#6e7488" stroke-width="1"/>
<text class="ax" x="891.1" y="717" text-anchor="middle">18:14</text>
<path d="M957.6 700 V705" stroke="#6e7488" stroke-width="1"/>
<text class="ax" x="957.6" y="717" text-anchor="middle">18:15</text>
<path d="M1024.2 700 V705" stroke="#6e7488" stroke-width="1"/>
<text class="ax" x="1024.2" y="717" text-anchor="middle">18:16</text>
<path d="M1090.8 700 V705" stroke="#6e7488" stroke-width="1"/>
<text class="ax" x="1090.8" y="717" text-anchor="middle">18:17</text>
<path d="M491.8,699.7 L491.8,692.3 L508.4,693.1 L525.1,687.2 L541.7,696.7 L558.3,684.7 L575.0,692.3 L591.6,694.4 L608.3,692.3 L624.9,698.5 L641.5,690.2 L658.2,689.3 L674.8,692.9 L691.4,695.9 L708.1,692.5 L724.7,698.5 L741.3,697.2 L758.0,696.8 L774.6,696.3 L791.2,698.5 L807.9,699.7 L824.5,697.8 L841.2,695.3 L857.8,698.0 L874.4,699.7 L891.1,693.8 L907.7,695.3 L924.3,694.4 L941.0,693.4 L957.6,698.3 L974.2,693.4 L990.9,698.0 L1007.5,699.7 L1024.2,697.4 L1040.8,698.5 L1057.4,698.3 L1074.1,694.2 L1090.7,699.7 L1107.3,693.4 L1124.0,687.4 L1140.6,699.4 L1140.6,699.7 Z" fill="#4cbf49" fill-opacity="0.12"/><polyline points="491.8,692.3 508.4,693.1 525.1,687.2 541.7,696.7 558.3,684.7 575.0,692.3 591.6,694.4 608.3,692.3 624.9,698.5 641.5,690.2 658.2,689.3 674.8,692.9 691.4,695.9 708.1,692.5 724.7,698.5 741.3,697.2 758.0,696.8 774.6,696.3 791.2,698.5 807.9,699.7 824.5,697.8 841.2,695.3 857.8,698.0 874.4,699.7 891.1,693.8 907.7,695.3 924.3,694.4 941.0,693.4 957.6,698.3 974.2,693.4 990.9,698.0 1007.5,699.7 1024.2,697.4 1040.8,698.5 1057.4,698.3 1074.1,694.2 1090.7,699.7 1107.3,693.4 1124.0,687.4 1140.6,699.4" fill="none" stroke="#4cbf49" stroke-width="1.1" stroke-linejoin="round"/>
<path d="M491.8,699.7 L491.8,699.7 L508.4,699.7 L525.1,699.7 L541.7,699.7 L558.3,699.7 L575.0,699.7 L591.6,699.7 L608.3,699.7 L624.9,699.7 L641.5,699.7 L658.2,699.7 L674.8,699.7 L691.4,699.7 L708.1,699.7 L724.7,699.7 L741.3,699.7 L758.0,699.7 L774.6,699.7 L791.2,699.7 L807.9,699.7 L824.5,699.7 L841.2,699.7 L857.8,699.7 L874.4,699.7 L891.1,699.7 L907.7,699.7 L924.3,699.7 L941.0,699.7 L957.6,699.7 L974.2,699.7 L990.9,699.7 L1007.5,699.7 L1024.2,699.7 L1040.8,699.7 L1057.4,699.7 L1074.1,699.7 L1090.7,699.7 L1107.3,699.7 L1124.0,699.7 L1140.6,699.7 L1140.6,699.7 Z" fill="#3a97f2" fill-opacity="0"/><polyline points="491.8,699.7 508.4,699.7 525.1,699.7 541.7,699.7 558.3,699.7 575.0,699.7 591.6,699.7 608.3,699.7 624.9,699.7 641.5,699.7 658.2,699.7 674.8,699.7 691.4,699.7 708.1,699.7 724.7,699.7 741.3,699.7 758.0,699.7 774.6,699.7 791.2,699.7 807.9,699.7 824.5,699.7 841.2,699.7 857.8,699.7 874.4,699.7 891.1,699.7 907.7,699.7 924.3,699.7 941.0,699.7 957.6,699.7 974.2,699.7 990.9,699.7 1007.5,699.7 1024.2,699.7 1040.8,699.7 1057.4,699.7 1074.1,699.7 1090.7,699.7 1107.3,699.7 1124.0,699.7 1140.6,699.7" fill="none" stroke="#3a97f2" stroke-width="1.1" stroke-linejoin="round"/>
<path d="M491.8,699.7 L491.8,699.7 L508.4,699.7 L525.1,699.7 L541.7,699.7 L558.3,699.7 L575.0,699.7 L591.6,699.7 L608.3,699.7 L624.9,699.7 L641.5,699.7 L658.2,699.7 L674.8,699.7 L691.4,699.7 L708.1,699.7 L724.7,699.7 L741.3,699.7 L758.0,699.7 L774.6,699.7 L791.2,699.7 L807.9,699.7 L824.5,699.7 L841.2,699.7 L857.8,699.7 L874.4,699.7 L891.1,699.7 L907.7,699.7 L924.3,699.7 L941.0,699.7 L957.6,699.7 L974.2,699.7 L990.9,699.7 L1007.5,699.7 L1024.2,699.7 L1040.8,699.7 L1057.4,699.7 L1074.1,699.7 L1090.7,699.7 L1107.3,699.7 L1124.0,699.7 L1140.6,699.7 L1140.6,699.7 Z" fill="#f9c846" fill-opacity="0"/><polyline points="491.8,699.7 508.4,699.7 525.1,699.7 541.7,699.7 558.3,699.7 575.0,699.7 591.6,699.7 608.3,699.7 624.9,699.7 641.5,699.7 658.2,699.7 674.8,699.7 691.4,699.7 708.1,699.7 724.7,699.7 741.3,699.7 758.0,699.7 774.6,699.7 791.2,699.7 807.9,699.7 824.5,699.7 841.2,699.7 857.8,699.7 874.4,699.7 891.1,699.7 907.7,699.7 924.3,699.7 941.0,699.7 957.6,699.7 974.2,699.7 990.9,699.7 1007.5,699.7 1024.2,699.7 1040.8,699.7 1057.4,699.7 1074.1,699.7 1090.7,699.7 1107.3,699.7 1124.0,699.7 1140.6,699.7" fill="none" stroke="#f9c846" stroke-width="1.1" stroke-linejoin="round"/>
<path d="M491.8,699.7 L491.8,699.7 L508.4,658.5 L525.1,699.7 L541.7,690.1 L558.3,699.7 L575.0,699.7 L591.6,699.7 L608.3,699.7 L624.9,699.7 L641.5,699.7 L658.2,699.7 L674.8,699.7 L691.4,699.7 L708.1,699.7 L724.7,699.7 L741.3,699.7 L758.0,699.7 L774.6,699.7 L791.2,691.9 L807.9,699.7 L824.5,699.7 L841.2,699.7 L857.8,699.7 L874.4,699.7 L891.1,699.7 L907.7,699.7 L924.3,699.7 L941.0,699.7 L957.6,699.7 L974.2,699.7 L990.9,699.7 L1007.5,699.7 L1024.2,699.7 L1040.8,699.7 L1057.4,699.7 L1074.1,699.7 L1090.7,699.7 L1107.3,699.7 L1124.0,699.7 L1140.6,699.7 L1140.6,699.7 Z" fill="#f4863e" fill-opacity="0.12"/><polyline points="491.8,699.7 508.4,658.5 525.1,699.7 541.7,690.1 558.3,699.7 575.0,699.7 591.6,699.7 608.3,699.7 624.9,699.7 641.5,699.7 658.2,699.7 674.8,699.7 691.4,699.7 708.1,699.7 724.7,699.7 741.3,699.7 758.0,699.7 774.6,699.7 791.2,691.9 807.9,699.7 824.5,699.7 841.2,699.7 857.8,699.7 874.4,699.7 891.1,699.7 907.7,699.7 924.3,699.7 941.0,699.7 957.6,699.7 974.2,699.7 990.9,699.7 1007.5,699.7 1024.2,699.7 1040.8,699.7 1057.4,699.7 1074.1,699.7 1090.7,699.7 1107.3,699.7 1124.0,699.7 1140.6,699.7" fill="none" stroke="#f4863e" stroke-width="1.1" stroke-linejoin="round"/>
<path d="M491.8,699.7 L491.8,614.4 L508.4,699.7 L525.1,699.7 L541.7,699.7 L558.3,614.4 L575.0,699.7 L591.6,699.7 L608.3,699.7 L624.9,614.4 L641.5,699.7 L658.2,699.7 L674.8,699.7 L691.4,623.6 L708.1,699.7 L724.7,699.7 L741.3,699.7 L758.0,623.6 L774.6,699.7 L791.2,699.7 L807.9,699.7 L824.5,614.4 L841.2,699.7 L857.8,699.7 L874.4,699.7 L891.1,654.6 L907.7,699.7 L924.3,699.7 L941.0,699.7 L957.6,637.6 L974.2,699.7 L990.9,699.7 L1007.5,699.7 L1024.2,637.6 L1040.8,699.7 L1057.4,699.7 L1074.1,699.7 L1090.7,699.7 L1107.3,699.7 L1124.0,699.7 L1140.6,699.7 L1140.6,699.7 Z" fill="#6568e4" fill-opacity="0.11"/><polyline points="491.8,614.4 508.4,699.7 525.1,699.7 541.7,699.7 558.3,614.4 575.0,699.7 591.6,699.7 608.3,699.7 624.9,614.4 641.5,699.7 658.2,699.7 674.8,699.7 691.4,623.6 708.1,699.7 724.7,699.7 741.3,699.7 758.0,623.6 774.6,699.7 791.2,699.7 807.9,699.7 824.5,614.4 841.2,699.7 857.8,699.7 874.4,699.7 891.1,654.6 907.7,699.7 924.3,699.7 941.0,699.7 957.6,637.6 974.2,699.7 990.9,699.7 1007.5,699.7 1024.2,637.6 1040.8,699.7 1057.4,699.7 1074.1,699.7 1090.7,699.7 1107.3,699.7 1124.0,699.7 1140.6,699.7" fill="none" stroke="#6568e4" stroke-width="1.1" stroke-linejoin="round"/>
<path d="M1208.5 597.5 H1859.5" stroke="#e3e4ea" stroke-width="1"/>
<text class="ax" x="1200.3" y="600.2" text-anchor="end">30s</text>
<path d="M1208.5 614.5 H1859.5" stroke="#e3e4ea" stroke-width="1"/>
<text class="ax" x="1200.3" y="617.2" text-anchor="end">25s</text>
<path d="M1208.5 631.5 H1859.5" stroke="#e3e4ea" stroke-width="1"/>
<text class="ax" x="1200.3" y="634.3" text-anchor="end">20s</text>
<path d="M1208.5 648.5 H1859.5" stroke="#e3e4ea" stroke-width="1"/>
<text class="ax" x="1200.3" y="651.4" text-anchor="end">15s</text>
<path d="M1208.5 665.5 H1859.5" stroke="#e3e4ea" stroke-width="1"/>
<text class="ax" x="1200.3" y="668.4" text-anchor="end">10s</text>
<path d="M1208.5 682.5 H1859.5" stroke="#e3e4ea" stroke-width="1"/>
<text class="ax" x="1200.3" y="685.5" text-anchor="end">5s</text>
<text class="ax" x="1200.3" y="702.5" text-anchor="end">0ms</text>
<path d="M1208.5 700 H1859.5" stroke="#6e7488" stroke-width="1"/>
<path d="M1209.2 700 V705" stroke="#6e7488" stroke-width="1"/>
<text class="ax" x="1209.2" y="717" text-anchor="middle">18:08</text>
<path d="M1277.6 700 V705" stroke="#6e7488" stroke-width="1"/>
<text class="ax" x="1277.6" y="717" text-anchor="middle">18:09</text>
<path d="M1346.0 700 V705" stroke="#6e7488" stroke-width="1"/>
<text class="ax" x="1346.0" y="717" text-anchor="middle">18:10</text>
<path d="M1414.4 700 V705" stroke="#6e7488" stroke-width="1"/>
<text class="ax" x="1414.4" y="717" text-anchor="middle">18:11</text>
<path d="M1482.8 700 V705" stroke="#6e7488" stroke-width="1"/>
<text class="ax" x="1482.8" y="717" text-anchor="middle">18:12</text>
<path d="M1551.2 700 V705" stroke="#6e7488" stroke-width="1"/>
<text class="ax" x="1551.2" y="717" text-anchor="middle">18:13</text>
<path d="M1619.6 700 V705" stroke="#6e7488" stroke-width="1"/>
<text class="ax" x="1619.6" y="717" text-anchor="middle">18:14</text>
<path d="M1688.0 700 V705" stroke="#6e7488" stroke-width="1"/>
<text class="ax" x="1688.0" y="717" text-anchor="middle">18:15</text>
<path d="M1756.4 700 V705" stroke="#6e7488" stroke-width="1"/>
<text class="ax" x="1756.4" y="717" text-anchor="middle">18:16</text>
<path d="M1824.8 700 V705" stroke="#6e7488" stroke-width="1"/>
<text class="ax" x="1824.8" y="717" text-anchor="middle">18:17</text>
<path d="M1209.2,699.7 L1209.2,698.7 L1226.3,698.7 L1243.4,698.6 L1260.5,698.7 L1277.6,698.2 L1294.7,698.7 L1311.8,698.3 L1328.9,698.7 L1346.0,698.7 L1363.1,698.3 L1380.2,698.5 L1397.3,698.5 L1414.4,698.7 L1431.5,698.5 L1448.6,698.3 L1465.7,698.3 L1482.8,697.7 L1499.9,697.8 L1517.0,698.3 L1534.1,698.5 L1551.2,697.8 L1568.3,698.3 L1585.4,697.8 L1602.5,698.3 L1619.6,697.7 L1636.7,698.2 L1653.8,698.3 L1670.9,698.5 L1688.0,697.8 L1705.1,698.3 L1722.2,698.5 L1739.3,698.5 L1756.4,698.3 L1773.5,698.5 L1790.6,698.7 L1807.7,698.7 L1824.8,698.7 L1841.9,698.5 L1859.0,698.3 L1859.0,699.7 Z" fill="#f4863e" fill-opacity="0.15"/><polyline points="1209.2,698.7 1226.3,698.7 1243.4,698.6 1260.5,698.7 1277.6,698.2 1294.7,698.7 1311.8,698.3 1328.9,698.7 1346.0,698.7 1363.1,698.3 1380.2,698.5 1397.3,698.5 1414.4,698.7 1431.5,698.5 1448.6,698.3 1465.7,698.3 1482.8,697.7 1499.9,697.8 1517.0,698.3 1534.1,698.5 1551.2,697.8 1568.3,698.3 1585.4,697.8 1602.5,698.3 1619.6,697.7 1636.7,698.2 1653.8,698.3 1670.9,698.5 1688.0,697.8 1705.1,698.3 1722.2,698.5 1739.3,698.5 1756.4,698.3 1773.5,698.5 1790.6,698.7 1807.7,698.7 1824.8,698.7 1841.9,698.5 1859.0,698.3" fill="none" stroke="#f4863e" stroke-width="1.1" stroke-linejoin="round"/>
<path d="M1209.2,699.7 L1209.2,699.0 L1226.3,699.0 L1243.4,699.0 L1260.5,698.9 L1277.6,699.0 L1294.7,699.0 L1311.8,698.8 L1328.9,699.0 L1346.0,699.0 L1363.1,699.0 L1380.2,699.0 L1397.3,699.0 L1414.4,698.8 L1431.5,699.0 L1448.6,699.0 L1465.7,699.0 L1482.8,698.8 L1499.9,698.8 L1517.0,699.0 L1534.1,699.0 L1551.2,698.7 L1568.3,699.0 L1585.4,699.0 L1602.5,699.0 L1619.6,698.8 L1636.7,699.0 L1653.8,699.0 L1670.9,699.0 L1688.0,699.0 L1705.1,699.0 L1722.2,699.0 L1739.3,699.0 L1756.4,699.0 L1773.5,699.0 L1790.6,699.0 L1807.7,699.0 L1824.8,699.0 L1841.9,698.7 L1859.0,698.5 L1859.0,699.7 Z" fill="#f9c846" fill-opacity="0.15"/><polyline points="1209.2,699.0 1226.3,699.0 1243.4,699.0 1260.5,698.9 1277.6,699.0 1294.7,699.0 1311.8,698.8 1328.9,699.0 1346.0,699.0 1363.1,699.0 1380.2,699.0 1397.3,699.0 1414.4,698.8 1431.5,699.0 1448.6,699.0 1465.7,699.0 1482.8,698.8 1499.9,698.8 1517.0,699.0 1534.1,699.0 1551.2,698.7 1568.3,699.0 1585.4,699.0 1602.5,699.0 1619.6,698.8 1636.7,699.0 1653.8,699.0 1670.9,699.0 1688.0,699.0 1705.1,699.0 1722.2,699.0 1739.3,699.0 1756.4,699.0 1773.5,699.0 1790.6,699.0 1807.7,699.0 1824.8,699.0 1841.9,698.7 1859.0,698.5" fill="none" stroke="#f9c846" stroke-width="1.1" stroke-linejoin="round"/>
<path d="M1209.2,699.7 L1209.2,699.6 L1226.3,699.6 L1243.4,699.6 L1260.5,699.6 L1277.6,699.6 L1294.7,699.6 L1311.8,699.6 L1328.9,699.6 L1346.0,699.6 L1363.1,699.6 L1380.2,699.6 L1397.3,699.6 L1414.4,699.6 L1431.5,672.6 L1448.6,699.6 L1465.7,699.6 L1482.8,699.6 L1499.9,699.6 L1517.0,699.6 L1534.1,699.6 L1551.2,699.6 L1568.3,699.6 L1585.4,699.6 L1602.5,699.6 L1619.6,699.6 L1636.7,699.6 L1653.8,699.6 L1670.9,699.6 L1688.0,699.6 L1705.1,699.6 L1722.2,699.6 L1739.3,699.6 L1756.4,699.6 L1773.5,672.6 L1790.6,699.6 L1807.7,699.6 L1824.8,699.6 L1841.9,699.6 L1859.0,699.6 L1859.0,699.7 Z" fill="#2db46a" fill-opacity="0.2"/><polyline points="1209.2,699.6 1226.3,699.6 1243.4,699.6 1260.5,699.6 1277.6,699.6 1294.7,699.6 1311.8,699.6 1328.9,699.6 1346.0,699.6 1363.1,699.6 1380.2,699.6 1397.3,699.6 1414.4,699.6 1431.5,672.6 1448.6,699.6 1465.7,699.6 1482.8,699.6 1499.9,699.6 1517.0,699.6 1534.1,699.6 1551.2,699.6 1568.3,699.6 1585.4,699.6 1602.5,699.6 1619.6,699.6 1636.7,699.6 1653.8,699.6 1670.9,699.6 1688.0,699.6 1705.1,699.6 1722.2,699.6 1739.3,699.6 1756.4,699.6 1773.5,672.6 1790.6,699.6 1807.7,699.6 1824.8,699.6 1841.9,699.6 1859.0,699.6" fill="none" stroke="#2db46a" stroke-width="1.1" stroke-linejoin="round"/>
<path d="M1209.2,699.7 L1209.2,699.5 L1226.3,699.5 L1243.4,699.5 L1260.5,699.5 L1277.6,699.5 L1294.7,699.5 L1311.8,699.5 L1328.9,699.5 L1346.0,613.3 L1363.1,699.5 L1380.2,699.5 L1397.3,699.5 L1414.4,699.5 L1431.5,699.5 L1448.6,699.5 L1465.7,699.5 L1482.8,699.5 L1499.9,699.5 L1517.0,699.5 L1534.1,699.5 L1551.2,666.4 L1568.3,699.5 L1585.4,699.5 L1602.5,699.5 L1619.6,699.5 L1636.7,699.5 L1653.8,699.5 L1670.9,699.5 L1688.0,699.5 L1705.1,699.5 L1722.2,699.5 L1739.3,699.5 L1756.4,684.0 L1773.5,699.5 L1790.6,699.5 L1807.7,699.5 L1824.8,699.5 L1841.9,699.5 L1859.0,699.5 L1859.0,699.7 Z" fill="#6568e4" fill-opacity="0.11"/><polyline points="1209.2,699.5 1226.3,699.5 1243.4,699.5 1260.5,699.5 1277.6,699.5 1294.7,699.5 1311.8,699.5 1328.9,699.5 1346.0,613.3 1363.1,699.5 1380.2,699.5 1397.3,699.5 1414.4,699.5 1431.5,699.5 1448.6,699.5 1465.7,699.5 1482.8,699.5 1499.9,699.5 1517.0,699.5 1534.1,699.5 1551.2,666.4 1568.3,699.5 1585.4,699.5 1602.5,699.5 1619.6,699.5 1636.7,699.5 1653.8,699.5 1670.9,699.5 1688.0,699.5 1705.1,699.5 1722.2,699.5 1739.3,699.5 1756.4,684.0 1773.5,699.5 1790.6,699.5 1807.7,699.5 1824.8,699.5 1841.9,699.5 1859.0,699.5" fill="none" stroke="#6568e4" stroke-width="1.1" stroke-linejoin="round"/>
<path d="M1209.2,699.7 L1209.2,699.4 L1226.3,699.4 L1243.4,699.4 L1260.5,699.4 L1277.6,699.4 L1294.7,699.4 L1311.8,699.4 L1328.9,699.4 L1346.0,699.4 L1363.1,699.4 L1380.2,699.4 L1397.3,699.4 L1414.4,699.4 L1431.5,699.4 L1448.6,699.4 L1465.7,699.4 L1482.8,699.4 L1499.9,699.4 L1517.0,699.4 L1534.1,699.4 L1551.2,699.4 L1568.3,699.4 L1585.4,699.4 L1602.5,699.4 L1619.6,699.4 L1636.7,699.4 L1653.8,699.4 L1670.9,699.4 L1688.0,699.4 L1705.1,699.4 L1722.2,699.4 L1739.3,699.4 L1756.4,699.4 L1773.5,699.4 L1790.6,699.4 L1807.7,699.4 L1824.8,699.4 L1841.9,699.4 L1859.0,699.4 L1859.0,699.7 Z" fill="#3a97f2" fill-opacity="0.1"/><polyline points="1209.2,699.4 1226.3,699.4 1243.4,699.4 1260.5,699.4 1277.6,699.4 1294.7,699.4 1311.8,699.4 1328.9,699.4 1346.0,699.4 1363.1,699.4 1380.2,699.4 1397.3,699.4 1414.4,699.4 1431.5,699.4 1448.6,699.4 1465.7,699.4 1482.8,699.4 1499.9,699.4 1517.0,699.4 1534.1,699.4 1551.2,699.4 1568.3,699.4 1585.4,699.4 1602.5,699.4 1619.6,699.4 1636.7,699.4 1653.8,699.4 1670.9,699.4 1688.0,699.4 1705.1,699.4 1722.2,699.4 1739.3,699.4 1756.4,699.4 1773.5,699.4 1790.6,699.4 1807.7,699.4 1824.8,699.4 1841.9,699.4 1859.0,699.4" fill="none" stroke="#3a97f2" stroke-width="1.1" stroke-linejoin="round"/>
</svg>
<svg class="abs" style="left:443px;top:820px;overflow:hidden" width="1456" height="119" viewBox="443 820 1456 119">
<path d="M504.5 837.5 H1858.5" stroke="#e3e4ea" stroke-width="1"/>
<text class="ax" x="497.4" y="840.4" text-anchor="end">7Krpm</text>
<path d="M504.5 851.5 H1858.5" stroke="#e3e4ea" stroke-width="1"/>
<text class="ax" x="497.4" y="855.1" text-anchor="end">6Krpm</text>
<path d="M504.5 866.5 H1858.5" stroke="#e3e4ea" stroke-width="1"/>
<text class="ax" x="497.4" y="869.7" text-anchor="end">5Krpm</text>
<path d="M504.5 881.5 H1858.5" stroke="#e3e4ea" stroke-width="1"/>
<text class="ax" x="497.4" y="884.4" text-anchor="end">4Krpm</text>
<path d="M504.5 895.5 H1858.5" stroke="#e3e4ea" stroke-width="1"/>
<text class="ax" x="497.4" y="899.1" text-anchor="end">3Krpm</text>
<path d="M504.5 910.5 H1858.5" stroke="#e3e4ea" stroke-width="1"/>
<text class="ax" x="497.4" y="913.8" text-anchor="end">2Krpm</text>
<path d="M504.5 925.5 H1858.5" stroke="#e3e4ea" stroke-width="1"/>
<text class="ax" x="497.4" y="928.4" text-anchor="end">1Krpm</text>
<path d="M504.5 939.9 H1858.5" stroke="#e3e4ea" stroke-width="1"/>
<text class="ax" x="497.4" y="943.1" text-anchor="end">0rpm</text>
<path d="M505.0,939.9 L505.0,855.5 L539.7,867.7 L574.4,851.6 L609.1,867.1 L643.8,857.2 L678.5,865.7 L713.1,854.1 L747.8,868.6 L782.5,860.4 L817.2,866.4 L851.9,852.0 L886.6,869.6 L921.3,855.5 L956.0,865.1 L990.7,854.1 L1025.3,869.5 L1060.0,856.1 L1094.7,865.7 L1129.4,855.3 L1164.1,869.5 L1198.8,860.1 L1233.5,865.1 L1268.2,854.5 L1302.9,869.9 L1337.6,858.3 L1372.2,863.3 L1406.9,853.1 L1441.6,867.6 L1476.3,858.9 L1511.0,866.3 L1545.7,861.9 L1580.4,880.5 L1615.1,867.6 L1649.8,881.4 L1684.5,866.5 L1719.1,881.7 L1753.8,907.5 L1788.5,869.6 L1823.2,855.8 L1857.9,904.1 L1857.9,939.9 Z" fill="#6f6be0" fill-opacity="0.11"/><polyline points="505.0,855.5 539.7,867.7 574.4,851.6 609.1,867.1 643.8,857.2 678.5,865.7 713.1,854.1 747.8,868.6 782.5,860.4 817.2,866.4 851.9,852.0 886.6,869.6 921.3,855.5 956.0,865.1 990.7,854.1 1025.3,869.5 1060.0,856.1 1094.7,865.7 1129.4,855.3 1164.1,869.5 1198.8,860.1 1233.5,865.1 1268.2,854.5 1302.9,869.9 1337.6,858.3 1372.2,863.3 1406.9,853.1 1441.6,867.6 1476.3,858.9 1511.0,866.3 1545.7,861.9 1580.4,880.5 1615.1,867.6 1649.8,881.4 1684.5,866.5 1719.1,881.7 1753.8,907.5 1788.5,869.6 1823.2,855.8 1857.9,904.1" fill="none" stroke="#6f6be0" stroke-width="1.1" stroke-linejoin="round"/>
<path d="M505.0,939.9 L505.0,861.1 L539.7,873.2 L574.4,863.2 L609.1,873.7 L643.8,864.3 L678.5,871.4 L713.1,866.4 L747.8,872.4 L782.5,869.5 L817.2,874.5 L851.9,859.4 L886.6,875.2 L921.3,866.0 L956.0,868.9 L990.7,866.0 L1025.3,872.4 L1060.0,865.7 L1094.7,871.7 L1129.4,865.1 L1164.1,875.9 L1198.8,868.5 L1233.5,869.9 L1268.2,865.1 L1302.9,875.6 L1337.6,866.0 L1372.2,870.2 L1406.9,864.3 L1441.6,872.6 L1476.3,868.8 L1511.0,872.6 L1545.7,873.2 L1580.4,886.1 L1615.1,877.8 L1649.8,885.2 L1684.5,878.1 L1719.1,889.3 L1753.8,873.7 L1788.5,873.4 L1823.2,911.0 L1857.9,918.6 L1857.9,939.9 Z" fill="#f9c846" fill-opacity="0.11"/><polyline points="505.0,861.1 539.7,873.2 574.4,863.2 609.1,873.7 643.8,864.3 678.5,871.4 713.1,866.4 747.8,872.4 782.5,869.5 817.2,874.5 851.9,859.4 886.6,875.2 921.3,866.0 956.0,868.9 990.7,866.0 1025.3,872.4 1060.0,865.7 1094.7,871.7 1129.4,865.1 1164.1,875.9 1198.8,868.5 1233.5,869.9 1268.2,865.1 1302.9,875.6 1337.6,866.0 1372.2,870.2 1406.9,864.3 1441.6,872.6 1476.3,868.8 1511.0,872.6 1545.7,873.2 1580.4,886.1 1615.1,877.8 1649.8,885.2 1684.5,878.1 1719.1,889.3 1753.8,873.7 1788.5,873.4 1823.2,911.0 1857.9,918.6" fill="none" stroke="#f9c846" stroke-width="1.1" stroke-linejoin="round"/>
<path d="M505.0,939.9 L505.0,917.5 L539.7,910.7 L574.4,908.2 L609.1,925.1 L643.8,918.2 L678.5,911.7 L713.1,903.1 L747.8,906.5 L782.5,907.6 L817.2,927.0 L851.9,923.8 L886.6,911.0 L921.3,907.6 L956.0,911.1 L990.7,905.4 L1025.3,893.5 L1060.0,898.7 L1094.7,905.4 L1129.4,903.4 L1164.1,904.1 L1198.8,898.1 L1233.5,911.1 L1268.2,913.2 L1302.9,906.6 L1337.6,898.1 L1372.2,902.9 L1406.9,900.9 L1441.6,913.2 L1476.3,911.3 L1511.0,920.2 L1545.7,917.3 L1580.4,907.9 L1615.1,905.4 L1649.8,904.4 L1684.5,909.8 L1719.1,917.9 L1753.8,930.2 L1788.5,909.4 L1823.2,923.3 L1857.9,939.9 L1857.9,939.9 Z" fill="#f4863e" fill-opacity="0.12"/><polyline points="505.0,917.5 539.7,910.7 574.4,908.2 609.1,925.1 643.8,918.2 678.5,911.7 713.1,903.1 747.8,906.5 782.5,907.6 817.2,927.0 851.9,923.8 886.6,911.0 921.3,907.6 956.0,911.1 990.7,905.4 1025.3,893.5 1060.0,898.7 1094.7,905.4 1129.4,903.4 1164.1,904.1 1198.8,898.1 1233.5,911.1 1268.2,913.2 1302.9,906.6 1337.6,898.1 1372.2,902.9 1406.9,900.9 1441.6,913.2 1476.3,911.3 1511.0,920.2 1545.7,917.3 1580.4,907.9 1615.1,905.4 1649.8,904.4 1684.5,909.8 1719.1,917.9 1753.8,930.2 1788.5,909.4 1823.2,923.3 1857.9,939.9" fill="none" stroke="#f4863e" stroke-width="1.1" stroke-linejoin="round"/>
<path d="M505.0,939.9 L505.0,904.8 L539.7,907.5 L574.4,898.1 L609.1,908.4 L643.8,904.1 L678.5,906.6 L713.1,899.6 L747.8,907.9 L782.5,905.4 L817.2,906.9 L851.9,900.1 L886.6,907.5 L921.3,904.1 L956.0,906.6 L990.7,900.1 L1025.3,907.9 L1060.0,904.0 L1094.7,906.5 L1129.4,901.2 L1164.1,907.6 L1198.8,905.4 L1233.5,906.9 L1268.2,899.9 L1302.9,908.2 L1337.6,904.8 L1372.2,906.2 L1406.9,898.7 L1441.6,908.5 L1476.3,905.3 L1511.0,907.5 L1545.7,939.9 L1580.4,939.9 L1615.1,838.8 L1649.8,921.4 L1684.5,906.6 L1719.1,912.6 L1753.8,939.9 L1788.5,907.5 L1823.2,900.9 L1857.9,939.9 L1857.9,939.9 Z" fill="#3a97f2" fill-opacity="0.11"/><polyline points="505.0,904.8 539.7,907.5 574.4,898.1 609.1,908.4 643.8,904.1 678.5,906.6 713.1,899.6 747.8,907.9 782.5,905.4 817.2,906.9 851.9,900.1 886.6,907.5 921.3,904.1 956.0,906.6 990.7,900.1 1025.3,907.9 1060.0,904.0 1094.7,906.5 1129.4,901.2 1164.1,907.6 1198.8,905.4 1233.5,906.9 1268.2,899.9 1302.9,908.2 1337.6,904.8 1372.2,906.2 1406.9,898.7 1441.6,908.5 1476.3,905.3 1511.0,907.5 1545.7,939.9 1580.4,939.9 1615.1,838.8 1649.8,921.4 1684.5,906.6 1719.1,912.6 1753.8,939.9 1788.5,907.5 1823.2,900.9 1857.9,939.9" fill="none" stroke="#3a97f2" stroke-width="1.1" stroke-linejoin="round"/>
<path d="M505.0,939.9 L505.0,935.1 L539.7,928.3 L574.4,935.1 L609.1,933.2 L643.8,934.6 L678.5,933.6 L713.1,935.6 L747.8,933.9 L782.5,927.0 L817.2,931.5 L851.9,935.1 L886.6,934.6 L921.3,935.1 L956.0,935.1 L990.7,935.1 L1025.3,935.1 L1060.0,933.3 L1094.7,934.8 L1129.4,934.8 L1164.1,935.1 L1198.8,935.1 L1233.5,934.6 L1268.2,934.8 L1302.9,935.1 L1337.6,933.6 L1372.2,935.1 L1406.9,935.4 L1441.6,935.4 L1476.3,934.6 L1511.0,934.8 L1545.7,938.1 L1580.4,935.4 L1615.1,926.6 L1649.8,931.0 L1684.5,935.1 L1719.1,935.6 L1753.8,936.2 L1788.5,936.2 L1823.2,938.1 L1857.9,938.9 L1857.9,939.9 Z" fill="#4cbf49" fill-opacity="0.12"/><polyline points="505.0,935.1 539.7,928.3 574.4,935.1 609.1,933.2 643.8,934.6 678.5,933.6 713.1,935.6 747.8,933.9 782.5,927.0 817.2,931.5 851.9,935.1 886.6,934.6 921.3,935.1 956.0,935.1 990.7,935.1 1025.3,935.1 1060.0,933.3 1094.7,934.8 1129.4,934.8 1164.1,935.1 1198.8,935.1 1233.5,934.6 1268.2,934.8 1302.9,935.1 1337.6,933.6 1372.2,935.1 1406.9,935.4 1441.6,935.4 1476.3,934.6 1511.0,934.8 1545.7,938.1 1580.4,935.4 1615.1,926.6 1649.8,931.0 1684.5,935.1 1719.1,935.6 1753.8,936.2 1788.5,936.2 1823.2,938.1 1857.9,938.9" fill="none" stroke="#4cbf49" stroke-width="1.1" stroke-linejoin="round"/>
</svg>
</body></html>
